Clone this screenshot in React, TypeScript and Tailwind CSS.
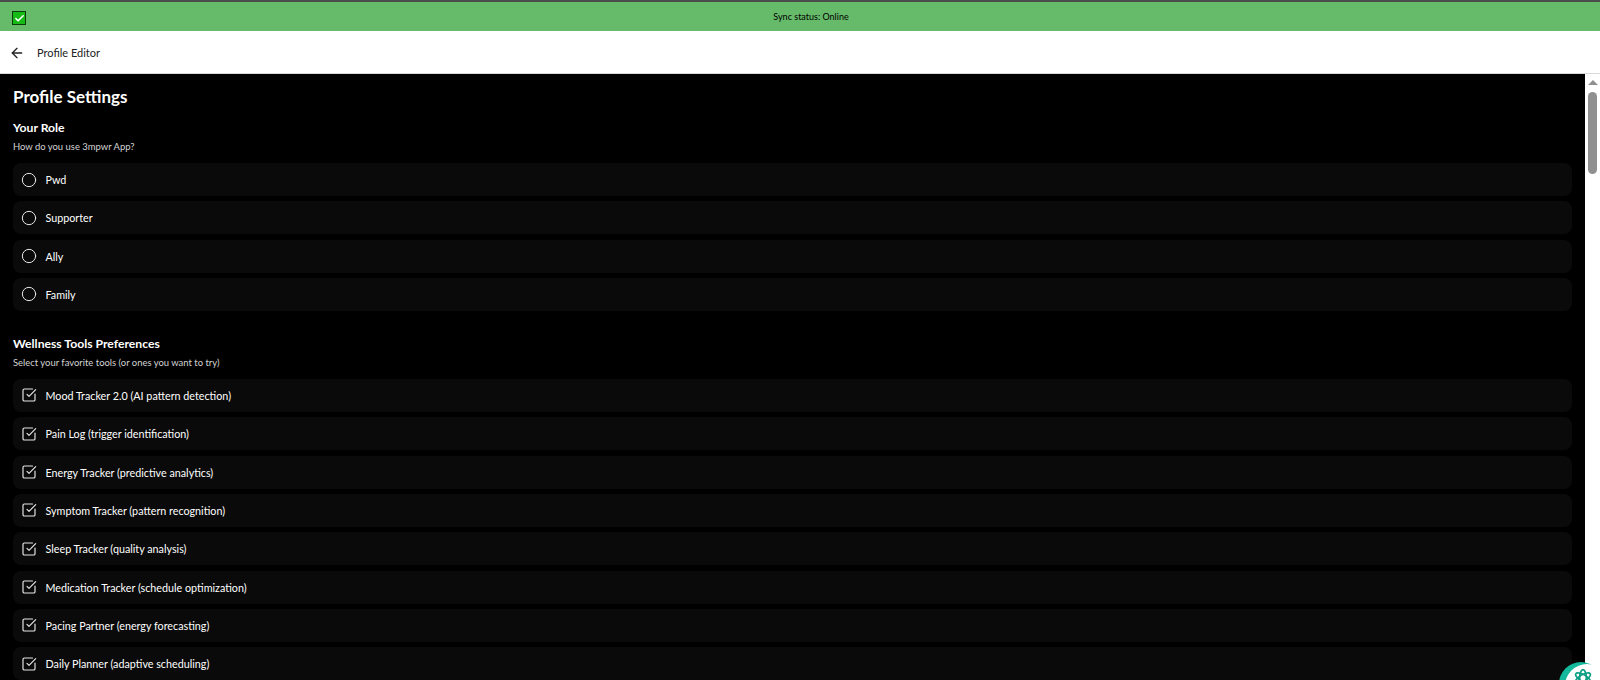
import { ArrowLeft, Check, SquareCheckBig, Circle } from "lucide-react";

const roles = ["Pwd", "Supporter", "Ally", "Family"];

const tools = [
  "Mood Tracker 2.0 (AI pattern detection)",
  "Pain Log (trigger identification)",
  "Energy Tracker (predictive analytics)",
  "Symptom Tracker (pattern recognition)",
  "Sleep Tracker (quality analysis)",
  "Medication Tracker (schedule optimization)",
  "Pacing Partner (energy forecasting)",
  "Daily Planner (adaptive scheduling)",
];

function OptionRow({ label, checked }: { label: string; checked?: boolean }) {
  return (
    <div className="flex h-[33px] shrink-0 items-center gap-[8.5px] rounded-lg bg-[#0a0a0a] pl-[8px] text-[10.75px] text-white">
      {checked ? (
        <SquareCheckBig className="h-[16px] w-[16px] text-[#e8e8e8]" strokeWidth={1.75} />
      ) : (
        <Circle className="h-[16px] w-[16px] text-[#e8e8e8]" strokeWidth={1.5} />
      )}
      <span className="pt-[1px]">{label}</span>
    </div>
  );
}

export default function App() {
  return (
    <div className="relative flex h-[680px] flex-col overflow-hidden bg-black font-['Lato',sans-serif]">
      <div className="flex h-[31px] shrink-0 items-center border-t-2 border-[#4b4f4b] bg-[#66bb6a] pl-[12px] pr-[4px] text-[9px] text-black">
        <div className="mt-[3px] flex h-[14px] w-[14px] items-center justify-center border border-[#0b3d0b] bg-[#16bb16]">
          <Check className="h-[11px] w-[11px] text-white" strokeWidth={3.5} />
        </div>
        <span className="flex-1 text-center">Sync status: Online</span>
      </div>

      <header className="flex h-[43px] shrink-0 items-center border-b border-[#d9d9d9] bg-white pl-[9px] pt-[2px] text-[11px] text-[#222]">
        <ArrowLeft className="h-[16px] w-[16px]" strokeWidth={2} />
        <span className="ml-[12px]">Profile Editor</span>
      </header>

      <div className="flex min-h-0 flex-1">
        <main className="min-w-0 flex-1 overflow-hidden pl-[13px] pr-[13px] pt-[11px] text-white">
          <h1 className="text-[17px] font-bold leading-[24px]">Profile Settings</h1>
          <h2 className="mt-[10px] text-[12.2px] font-bold leading-[18px]">Your Role</h2>
          <p className="mt-[3px] text-[9.45px] leading-[14px] text-[#d4d4d4]">How do you use 3mpwr App?</p>

          <div className="mt-[9px] flex flex-col gap-[5.33px]">
            {roles.map((role) => (
              <OptionRow key={role} label={role} />
            ))}
          </div>

          <h2 className="mt-[24px] text-[12.2px] font-bold leading-[18px]">Wellness Tools Preferences</h2>
          <p className="mt-[3px] text-[9.45px] leading-[14px] text-[#d4d4d4]">Select your favorite tools (or ones you want to try)</p>

          <div className="mt-[9px] flex flex-col gap-[5.33px]">
            {tools.map((tool) => (
              <OptionRow key={tool} label={tool} checked />
            ))}
          </div>
        </main>

        <div className="flex w-[15px] shrink-0 flex-col items-center bg-white pt-[6px]">
          <div className="h-0 w-0 border-x-[5px] border-b-[5px] border-x-transparent border-b-[#909090]" />
          <div className="mt-[7px] h-[82px] w-[9px] rounded-full bg-[#909090]" />
        </div>
      </div>

      <div className="absolute left-[1559px] top-[662px] h-[44px] w-[44px] rounded-full bg-[#14b89a]" />
      <div className="absolute left-[1565px] top-[664px] flex h-[44px] w-[44px] justify-center rounded-full bg-white pt-[4px] pr-[8px]">
        <svg viewBox="0 0 24 24" className="h-[20px] w-[20px] text-[#0d9e84]" fill="none" stroke="currentColor" strokeWidth="2">
          <ellipse cx="12" cy="12" rx="10" ry="4" transform="rotate(30 12 12)" />
          <ellipse cx="12" cy="12" rx="10" ry="4" transform="rotate(-30 12 12)" />
          <ellipse cx="12" cy="12" rx="10" ry="4" transform="rotate(90 12 12)" />
        </svg>
      </div>
    </div>
  );
}
